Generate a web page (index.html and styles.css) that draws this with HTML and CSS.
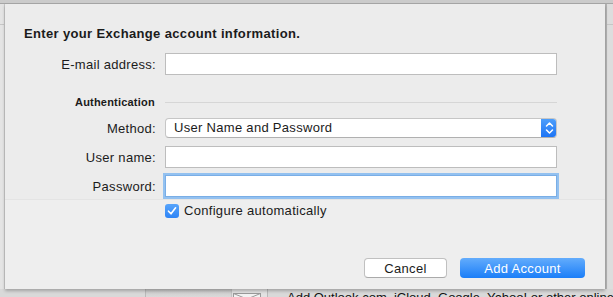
FILE: index.html
```html
<!DOCTYPE html>
<html lang="en">
<head>
  <meta charset="UTF-8">
  <title>Exchange Account</title>
  <link rel="stylesheet" href="styles.css">
</head>
<body>
  <div class="topbar"></div>
  <div class="stage">
    <div class="side left"><div class="side-line"></div></div>

    <div class="sheet">
      <div class="panel">
        <h1>Enter your Exchange account information.</h1>

        <div class="row email-row">
          <label>E-mail address:</label>
          <div class="input"></div>
        </div>

        <div class="section">
          <div class="section-title">Authentication</div>
          <div class="section-line"></div>
        </div>

        <div class="row method-row">
          <label>Method:</label>
          <div class="select">
            <span class="select-text">User Name and Password</span>
            <span class="stepper">
              <svg width="9" height="14" viewBox="0 0 9 14">
                <path d="M1.5 5 L4.5 2 L7.5 5" fill="none" stroke="#fff" stroke-width="1.5" stroke-linecap="round" stroke-linejoin="round"/>
                <path d="M1.5 9 L4.5 12 L7.5 9" fill="none" stroke="#fff" stroke-width="1.5" stroke-linecap="round" stroke-linejoin="round"/>
              </svg>
            </span>
          </div>
        </div>

        <div class="row user-row">
          <label>User name:</label>
          <div class="input"></div>
        </div>

        <div class="row pass-row">
          <label>Password:</label>
          <div class="input focused"></div>
        </div>
      </div>

      <div class="check-row">
        <span class="checkbox">
          <svg width="10" height="10" viewBox="0 0 10 10">
            <path d="M1.5 5.2 L4 7.8 L8.6 1.8" fill="none" stroke="#fff" stroke-width="1.6" stroke-linecap="round" stroke-linejoin="round"/>
          </svg>
        </span>
        <span class="check-label">Configure automatically</span>
      </div>

      <div class="footer">
        <button class="btn">Cancel</button>
        <button class="btn default">Add Account</button>
      </div>
    </div>

    <div class="side right"><div class="side-line"></div></div>
  </div>

  <div class="behind">
    <div class="behind-pad"></div>
    <div class="behind-tab"></div>
    <div class="behind-icon">
      <svg width="28" height="8" viewBox="0 0 28 8">
        <rect x="0.5" y="0.5" width="27" height="10" fill="#f2f2f2" stroke="#9a9a9a"/>
        <path d="M0.5 0.5 L14 6 L27.5 0.5" fill="none" stroke="#9a9a9a"/>
      </svg>
    </div>
    <div class="behind-text">Add Outlook.com, iCloud, Google, Yahoo! or other online email accounts</div>
  </div>
</body>
</html>
```

FILE: styles.css
```css
* {
  margin: 0;
  padding: 0;
  box-sizing: border-box;
}

body {
  width: 613px;
  height: 297px;
  overflow: hidden;
  background: #dedede;
  font-family: 'Liberation Sans', Arial, sans-serif;
  font-size: 13px;
  color: #1b1b1b;
}

.topbar {
  height: 4px;
  background: #cbcbcb;
  border-bottom: 1px solid #a6a6a6;
}

.stage {
  display: flex;
  height: 285px;
}

.side {
  background: #e4e4e4;
}

.side.left {
  width: 5px;
  border-right: 1px solid #c9c9c9;
}

.side.right {
  width: 8px;
  background: #dddddd;
  border-left: 2px solid #b3b3b3;
}

.side-line {
  margin-top: 20px;
  height: 1px;
  background: #c6c6c6;
}

.sheet {
  width: 600px;
  background: #eeeeee;
  display: flex;
  flex-direction: column;
  box-shadow: 0 2px 3px rgba(0, 0, 0, 0.25);
  position: relative;
  z-index: 1;
}

.panel {
  background: #ececec;
  padding: 22px 0 2px;
  border-bottom: 1px solid #e4e4e4;
}

h1 {
  font-size: 13px;
  font-weight: 700;
  line-height: 16px;
  margin-left: 19px;
  letter-spacing: 0.35px;
}

.row {
  display: grid;
  grid-template-columns: 151px 392px;
  column-gap: 9px;
  align-items: center;
}

.row label {
  text-align: right;
  letter-spacing: 0.3px;
}

.email-row {
  margin-top: 11px;
}

.input {
  height: 22px;
  background: #fff;
  border: 1px solid #bdbdbd;
}

.input.focused {
  border-color: #7aaee6;
  box-shadow: 0 0 0 2px #93c1f0;
}

.section {
  display: flex;
  align-items: center;
  margin-top: 20px;
  height: 14px;
}

.section-title {
  width: 160px;
  padding-left: 70px;
  font-size: 11px;
  font-weight: 700;
  letter-spacing: 0.2px;
}

.section-line {
  width: 392px;
  height: 1px;
  background: #d6d6d6;
}

.method-row {
  margin-top: 9px;
}

.select {
  height: 20px;
  display: flex;
  background: #fff;
  border: 1px solid #c6c6c6;
  border-bottom-color: #b0b0b0;
  border-radius: 4px;
  overflow: hidden;
}

.select-text {
  flex: 1;
  padding-left: 8px;
  line-height: 18px;
  letter-spacing: 0.3px;
}

.stepper {
  width: 16px;
  display: flex;
  align-items: center;
  justify-content: center;
  background: linear-gradient(#4fa0fb, #1a72f5);
  margin: -1px -1px -1px 0;
}

.user-row {
  margin-top: 8px;
}

.pass-row {
  margin-top: 7px;
}

.check-row {
  display: flex;
  align-items: center;
  margin: 3px 0 0 160px;
  height: 15px;
}

.checkbox {
  width: 14px;
  height: 14px;
  border-radius: 3px;
  background: linear-gradient(#57a4fb, #2d84f6);
  display: flex;
  align-items: center;
  justify-content: center;
}

.check-label {
  margin-left: 5px;
  letter-spacing: 0.3px;
}

.footer {
  margin-top: auto;
  display: flex;
  justify-content: flex-end;
  gap: 13px;
  padding: 0 20px 11px 0;
}

.btn {
  height: 20px;
  width: 83px;
  font-family: inherit;
  font-size: 13px;
  color: #1b1b1b;
  background: #fff;
  border: 1px solid #c0c0c0;
  border-bottom-color: #aaaaaa;
  border-radius: 4px;
  letter-spacing: 0.3px;
}

.btn.default {
  width: 125px;
  color: #fff;
  border: none;
  background: linear-gradient(#63acfc, #1b7ef8);
}

.behind {
  display: flex;
  height: 8px;
  overflow: hidden;
  background: #d9d9d9;
}

.behind > div {
  flex-shrink: 0;
}

.behind-pad {
  width: 146px;
  border-right: 1px solid #b9b9b9;
}

.behind-tab {
  width: 86px;
  background: linear-gradient(#c7c7c7, #dadada);
  border-right: 1px solid #c4c4c4;
}

.behind-icon {
  width: 36px;
  padding-left: 1px;
  border-right: 1px solid #b9b9b9;
  background: #e2e2e2;
}

.behind-text {
  padding-left: 19px;
  line-height: 18px;
  white-space: nowrap;
  color: #111;
}
```
